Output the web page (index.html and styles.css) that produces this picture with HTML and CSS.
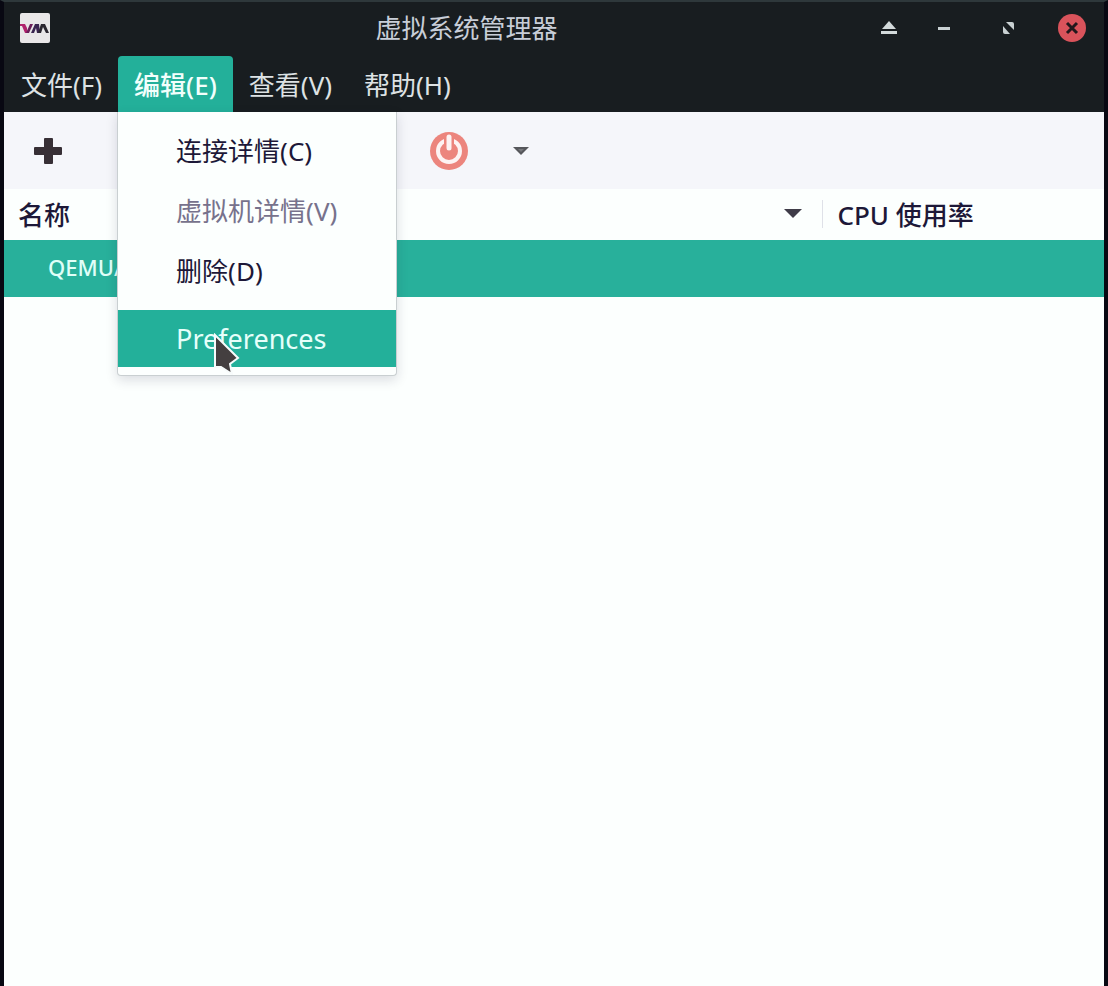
FILE: index.html
```html
<!DOCTYPE html>
<html lang="zh-CN">
<head>
    <meta charset="UTF-8">
    <meta name="viewport" content="width=device-width, initial-scale=1.0">
    <title>虚拟系统管理器</title>
    <link rel="stylesheet" href="styles.css">
</head>
<body>
    <div class="window">
        <header class="titlebar">
            <svg class="app-logo" viewBox="0 0 30 30" aria-hidden="true">
                <rect width="30" height="30" rx="2" fill="#e9e7e8"/>
                <path d="M0 11h5l2 4v5H5L2 13H0z" fill="#b0226c"/>
                <path d="M6 20l4-9h3l-4 9z" fill="#6a1c58"/>
                <path d="M11 20l4-9h4l1 9h-3l-1-5-2 5z" fill="#3a2450"/>
                <path d="M18 20l3-9h4l4 9h-3l-3-6-2 6z" fill="#2b2730"/>
            </svg>
            <h1 class="window-title">虚拟系统管理器</h1>
            <div class="window-controls">
                <button class="window-button" aria-label="置顶">
                    <svg width="18" height="18" viewBox="0 0 18 18"><path d="M9 2l7 8H2zM1 12h16v3H1z" fill="#d3dadb"/></svg>
                </button>
                <button class="window-button" aria-label="最小化">
                    <svg width="28" height="18" viewBox="0 0 28 18"><path d="M2 8h12v3H2z" fill="#c9d1d3"/></svg>
                </button>
                <button class="window-button" aria-label="最大化">
                    <svg width="28" height="18" viewBox="0 0 28 18"><path d="M9 3h6q2 0 2 2v6zM6 7v6q0 2 2 2h5z" fill="#c9d1d3"/></svg>
                </button>
                <button class="window-button" aria-label="关闭">
                    <svg width="28" height="28" viewBox="0 0 28 28">
                        <circle cx="14" cy="14" r="14" fill="#d9535b"/>
                        <path d="M9 9l10 10M19 9L9 19" stroke="#22181c" stroke-width="3"/>
                    </svg>
                </button>
            </div>
        </header>

        <nav class="menubar">
            <div class="menu-item">
                <button class="menu-button">文件(F)</button>
            </div>
            <div class="menu-item">
                <button class="menu-button active" aria-expanded="true">编辑(E)</button>
                <div class="dropdown" role="menu">
                    <button class="dropdown-item" role="menuitem">连接详情(C)</button>
                    <button class="dropdown-item" role="menuitem" disabled>虚拟机详情(V)</button>
                    <button class="dropdown-item" role="menuitem">删除(D)</button>
                    <button class="dropdown-item selected" role="menuitem">Preferences</button>
                    <svg class="cursor" viewBox="0 0 28 42" aria-hidden="true">
                        <path d="M2 2v32h6l11 7-2-10 8-6z" fill="#443f40" stroke="#f7fbfb" stroke-width="2"/>
                    </svg>
                </div>
            </div>
            <div class="menu-item">
                <button class="menu-button">查看(V)</button>
            </div>
            <div class="menu-item">
                <button class="menu-button">帮助(H)</button>
            </div>
        </nav>

        <div class="toolbar">
            <button class="tool-button" aria-label="新建虚拟机">
                <svg width="28" height="28" viewBox="0 0 28 28"><path d="M11 1h7q1 0 1 1v8h8q1 0 1 1v6q0 1-1 1h-8v8q0 1-1 1h-7q-1 0-1-1v-8H1q-1 0-1-1v-6q0-1 1-1h9V2q0-1 1-1z" fill="#372f35"/></svg>
            </button>
            <button class="tool-button tool-power" aria-label="关机">
                <svg width="40" height="40" viewBox="0 0 40 40">
                    <circle cx="20" cy="20" r="19" fill="#ec857d"/>
                    <circle cx="20" cy="20" r="11" fill="none" stroke="#fdf3f3" stroke-width="4"/>
                    <path d="M15 5h10v14H15z" fill="#ec857d"/>
                    <path d="M20 6v11" stroke="#fdf3f3" stroke-width="5" stroke-linecap="round"/>
                </svg>
            </button>
            <button class="tool-button" aria-label="关机选项">
                <svg width="16" height="8" viewBox="0 0 16 8"><path d="M0 0h16L8 8z" fill="#56575b"/><path d="M5 2h6L8 5z" fill="#77787c"/></svg>
            </button>
        </div>

        <main class="content">
            <table class="vm-list">
                <thead>
                    <tr>
                        <th class="col-name">
                            <div class="col-header">
                                名称
                                <svg width="18" height="9" viewBox="0 0 16 8" aria-hidden="true"><path d="M0 0h16L8 8z" fill="#3f3c48"/></svg>
                            </div>
                        </th>
                        <th class="col-cpu"><div class="col-header">CPU 使用率</div></th>
                    </tr>
                </thead>
                <tbody>
                    <tr class="selected">
                        <td>QEMU/KVM</td>
                        <td></td>
                    </tr>
                </tbody>
            </table>
        </main>
    </div>
</body>
</html>
```
FILE: styles.css
```css
* {
    box-sizing: border-box;
}

body {
    margin: 0;
    font-family: "Noto Sans", "Noto Sans CJK SC", sans-serif;
    font-size: 26px;
    color: #1d1838;
}

button {
    margin: 0;
    padding: 0;
    border: none;
    background: none;
    font: inherit;
    color: inherit;
}

svg {
    display: block;
}

.window {
    display: flex;
    flex-direction: column;
    min-height: 100vh;
    border: 4px solid #080812;
    border-top: 2px solid #2e383b;
    border-bottom: none;
    background-color: #fcfffe;
}

.titlebar {
    display: flex;
    align-items: center;
    height: 54px;
    padding: 0 18px 2px 16px;
    background-color: #181d20;
}

.app-logo {
    width: 30px;
    height: 30px;
}

.window-title {
    flex: 1;
    margin: 0;
    padding-left: 8px;
    font-size: 26px;
    line-height: 38px;
    font-weight: 400;
    text-align: center;
    color: #c8ced8;
}

.window-controls {
    display: flex;
    align-items: center;
    gap: 33px;
}

.window-button {
    display: flex;
    justify-content: center;
    min-width: 28px;
}

.menubar {
    display: flex;
    height: 56px;
    padding-left: 1px;
    background-color: #181d20;
}

.menu-item {
    position: relative;
}

.menu-button {
    height: 56px;
    padding: 0 16px;
    border-radius: 4px 4px 0 0;
    color: #dde2e4;
}

.menu-button.active {
    background-color: #23b09a;
    color: #f2fffc;
    font-weight: 500;
}

.dropdown {
    position: absolute;
    top: 100%;
    left: -1px;
    z-index: 10;
    width: 280px;
    padding: 8px 0;
    background-color: #fcfffe;
    border: 1px solid #c9cfd1;
    border-top: none;
    border-radius: 0 0 4px 4px;
    box-shadow: 0 4px 12px rgba(30, 30, 60, 0.15);
}

.dropdown-item {
    display: block;
    width: 100%;
    height: 60px;
    padding: 0 58px;
    text-align: left;
    white-space: nowrap;
}

.dropdown-item:disabled {
    color: #77728c;
}

.dropdown-item.selected {
    height: 57px;
    margin-top: 10px;
    background-color: #23b09a;
    color: #e6fffa;
    font-size: 27px;
}

.cursor {
    position: absolute;
    left: 95px;
    bottom: 0;
    width: 28px;
    height: 42px;
}

/* the second column is the space behind the open menu */
.toolbar {
    display: grid;
    grid-template-columns: 88px 309px 96px 48px;
    height: 77px;
    background-color: #f5f6fa;
}

.tool-button {
    display: flex;
    align-items: center;
    justify-content: center;
}

.tool-power {
    grid-column: 3;
}

.content {
    flex: 1;
}

.vm-list {
    width: 100%;
    border-collapse: collapse;
    table-layout: fixed;
}

.vm-list th {
    height: 51px;
    padding: 0 0 2px;
    font-weight: 500;
    text-align: left;
}

.col-name {
    width: 74.4%;
}

.col-header {
    display: flex;
    align-items: center;
    justify-content: space-between;
    height: 28px;
    padding: 0 20px 0 14px;
}

.col-cpu .col-header {
    border-left: 1px solid #dfe1e8;
}

.vm-list td {
    height: 57px;
    padding: 0 44px 4px;
    font-size: 22px;
    font-weight: 500;
}

.vm-list .selected {
    background-color: #28b09b;
    color: #e0fff8;
}
```
